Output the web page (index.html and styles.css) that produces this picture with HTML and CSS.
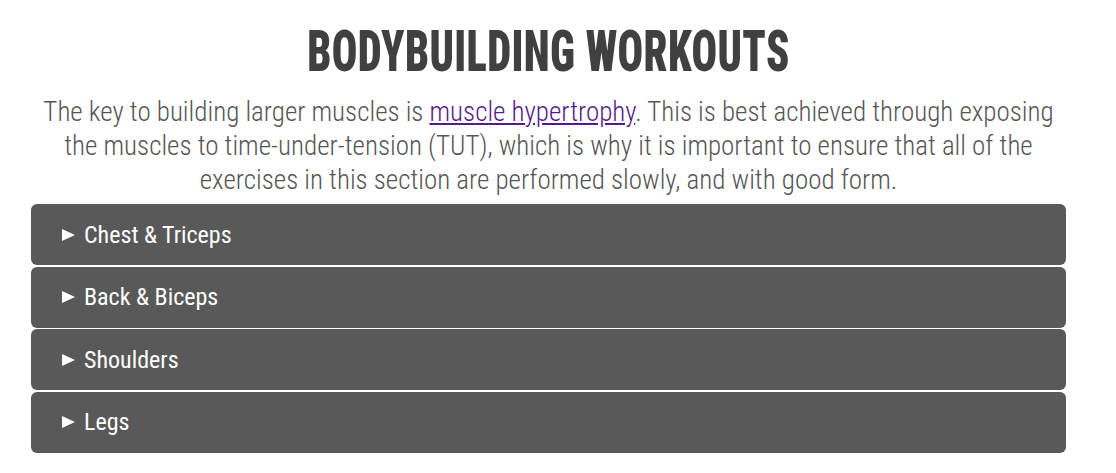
FILE: index.html
```html
<!DOCTYPE html>
<html lang="en">
<head>
<meta charset="utf-8">
<title>Bodybuilding Workouts</title>
<link rel="stylesheet" href="styles.css">
</head>
<body>
<main class="page">
  <h1 class="title">BODYBUILDING WORKOUTS</h1>
  <p class="intro">The key to building larger muscles is <a href="#" class="intro-link">muscle hypertrophy</a>. This is best achieved through exposing the muscles to time-under-tension (TUT), which is why it is important to ensure that all of the exercises in this section are performed slowly, and with good form.</p>
  <section class="groups">
    <details class="group"><summary class="group-head"><span class="arrow"></span>Chest &amp; Triceps</summary></details>
    <details class="group"><summary class="group-head"><span class="arrow"></span>Back &amp; Biceps</summary></details>
    <details class="group"><summary class="group-head"><span class="arrow"></span>Shoulders</summary></details>
    <details class="group"><summary class="group-head"><span class="arrow"></span>Legs</summary></details>
  </section>
</main>
</body>
</html>
```
FILE: styles.css
```css
html, body {
  margin: 0;
  padding: 0;
  background: #ffffff;
}
.page {
  width: 1035px;
  margin: 0 0 0 31px;
  padding-top: 20px;
}
.title {
  margin: 0;
  text-align: center;
  font-family: Roboto, sans-serif;
  font-weight: 900;
  font-stretch: 75%;
  font-size: 57px;
  line-height: 64px;
  color: #404040;
  letter-spacing: 0.5px;
  transform: scaleX(0.745);
  transform-origin: 50% 50%;
}
.intro {
  margin: 11px 0 7px;
  text-align: center;
  font-family: Roboto, sans-serif;
  font-weight: 300;
  font-stretch: 75%;
  font-size: 27px;
  line-height: 34px;
  color: #555555;
}
.intro-link {
  color: #551a8b;
  text-decoration: underline;
}
.groups {
  display: flex;
  flex-direction: column;
  gap: 1.5px;
}
.group {
  background: #595959;
  border-radius: 6px;
}
.group-head {
  list-style: none;
  display: flex;
  align-items: center;
  height: 61px;
  padding-left: 31px;
  font-family: Roboto, sans-serif;
  font-weight: 400;
  font-stretch: 75%;
  font-size: 24px;
  color: #ffffff;
  cursor: pointer;
}
.group-head::-webkit-details-marker {
  display: none;
}
.arrow {
  width: 0;
  height: 0;
  border-top: 6.5px solid transparent;
  border-bottom: 6.5px solid transparent;
  border-left: 13px solid #ffffff;
  margin-right: 9px;
}
```
